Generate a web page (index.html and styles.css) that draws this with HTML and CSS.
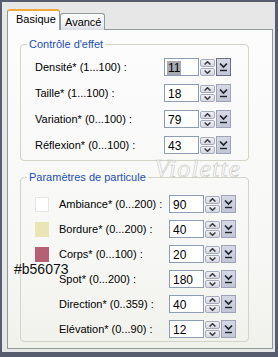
FILE: index.html
```html
<!DOCTYPE html>
<html lang="fr">
<head>
<meta charset="utf-8">
<link rel="stylesheet" href="styles.css">
</head>
<body>
<div class="window">
  <div class="tabs">
    <div class="tab active">Basique</div>
    <div class="tab">Avancé</div>
  </div>
  <div class="panel">
    <fieldset class="group g1">
      <legend>Contrôle d'effet</legend>
      <div class="row first">
        <span class="label">Densité* (1...100) :</span>
        <div class="field"><span class="val sel">11</span></div>
        <div class="spin"><span class="sb"><svg width="7" height="4" viewBox="0 0 7 4"><path d="M0.6 3.5L3.5 0.7L6.4 3.5" stroke="#3a3a44" stroke-width="1.5" fill="none"/></svg></span><span class="sb"><svg width="7" height="4" viewBox="0 0 7 4"><path d="M0.6 0.5L3.5 3.3L6.4 0.5" stroke="#3a3a44" stroke-width="1.5" fill="none"/></svg></span></div>
        <div class="drop focus"><svg width="9" height="10" viewBox="0 0 9 10"><path d="M1 1.5L4.5 5L8 1.5" stroke="#22222c" stroke-width="1.7" fill="none"/><path d="M1 8.5h7" stroke="#22222c" stroke-width="1.4"/></svg></div>
      </div>
      <div class="row">
        <span class="label">Taille* (1...100) :</span>
        <div class="field"><span class="val">18</span></div>
        <div class="spin"><span class="sb"><svg width="7" height="4" viewBox="0 0 7 4"><path d="M0.6 3.5L3.5 0.7L6.4 3.5" stroke="#3a3a44" stroke-width="1.5" fill="none"/></svg></span><span class="sb"><svg width="7" height="4" viewBox="0 0 7 4"><path d="M0.6 0.5L3.5 3.3L6.4 0.5" stroke="#3a3a44" stroke-width="1.5" fill="none"/></svg></span></div>
        <div class="drop"><svg width="9" height="10" viewBox="0 0 9 10"><path d="M1 1.5L4.5 5L8 1.5" stroke="#22222c" stroke-width="1.7" fill="none"/><path d="M1 8.5h7" stroke="#22222c" stroke-width="1.4"/></svg></div>
      </div>
      <div class="row">
        <span class="label">Variation* (0...100) :</span>
        <div class="field"><span class="val">79</span></div>
        <div class="spin"><span class="sb"><svg width="7" height="4" viewBox="0 0 7 4"><path d="M0.6 3.5L3.5 0.7L6.4 3.5" stroke="#3a3a44" stroke-width="1.5" fill="none"/></svg></span><span class="sb"><svg width="7" height="4" viewBox="0 0 7 4"><path d="M0.6 0.5L3.5 3.3L6.4 0.5" stroke="#3a3a44" stroke-width="1.5" fill="none"/></svg></span></div>
        <div class="drop"><svg width="9" height="10" viewBox="0 0 9 10"><path d="M1 1.5L4.5 5L8 1.5" stroke="#22222c" stroke-width="1.7" fill="none"/><path d="M1 8.5h7" stroke="#22222c" stroke-width="1.4"/></svg></div>
      </div>
      <div class="row">
        <span class="label">Réflexion* (0...100) :</span>
        <div class="field"><span class="val">43</span></div>
        <div class="spin"><span class="sb"><svg width="7" height="4" viewBox="0 0 7 4"><path d="M0.6 3.5L3.5 0.7L6.4 3.5" stroke="#3a3a44" stroke-width="1.5" fill="none"/></svg></span><span class="sb"><svg width="7" height="4" viewBox="0 0 7 4"><path d="M0.6 0.5L3.5 3.3L6.4 0.5" stroke="#3a3a44" stroke-width="1.5" fill="none"/></svg></span></div>
        <div class="drop"><svg width="9" height="10" viewBox="0 0 9 10"><path d="M1 1.5L4.5 5L8 1.5" stroke="#22222c" stroke-width="1.7" fill="none"/><path d="M1 8.5h7" stroke="#22222c" stroke-width="1.4"/></svg></div>
      </div>
    </fieldset>

    <fieldset class="group g2">
      <legend>Paramètres de particule</legend>
      <div class="row first">
        <span class="swatch white"></span>
        <span class="label">Ambiance* (0...200) :</span>
        <div class="field"><span class="val">90</span></div>
        <div class="spin"><span class="sb"><svg width="7" height="4" viewBox="0 0 7 4"><path d="M0.6 3.5L3.5 0.7L6.4 3.5" stroke="#3a3a44" stroke-width="1.5" fill="none"/></svg></span><span class="sb"><svg width="7" height="4" viewBox="0 0 7 4"><path d="M0.6 0.5L3.5 3.3L6.4 0.5" stroke="#3a3a44" stroke-width="1.5" fill="none"/></svg></span></div>
        <div class="drop"><svg width="9" height="10" viewBox="0 0 9 10"><path d="M1 1.5L4.5 5L8 1.5" stroke="#22222c" stroke-width="1.7" fill="none"/><path d="M1 8.5h7" stroke="#22222c" stroke-width="1.4"/></svg></div>
      </div>
      <div class="row">
        <span class="swatch beige"></span>
        <span class="label">Bordure* (0...200) :</span>
        <div class="field"><span class="val">40</span></div>
        <div class="spin"><span class="sb"><svg width="7" height="4" viewBox="0 0 7 4"><path d="M0.6 3.5L3.5 0.7L6.4 3.5" stroke="#3a3a44" stroke-width="1.5" fill="none"/></svg></span><span class="sb"><svg width="7" height="4" viewBox="0 0 7 4"><path d="M0.6 0.5L3.5 3.3L6.4 0.5" stroke="#3a3a44" stroke-width="1.5" fill="none"/></svg></span></div>
        <div class="drop"><svg width="9" height="10" viewBox="0 0 9 10"><path d="M1 1.5L4.5 5L8 1.5" stroke="#22222c" stroke-width="1.7" fill="none"/><path d="M1 8.5h7" stroke="#22222c" stroke-width="1.4"/></svg></div>
      </div>
      <div class="row">
        <span class="swatch rose"></span>
        <span class="label">Corps* (0...100) :</span>
        <div class="field"><span class="val">20</span></div>
        <div class="spin"><span class="sb"><svg width="7" height="4" viewBox="0 0 7 4"><path d="M0.6 3.5L3.5 0.7L6.4 3.5" stroke="#3a3a44" stroke-width="1.5" fill="none"/></svg></span><span class="sb"><svg width="7" height="4" viewBox="0 0 7 4"><path d="M0.6 0.5L3.5 3.3L6.4 0.5" stroke="#3a3a44" stroke-width="1.5" fill="none"/></svg></span></div>
        <div class="drop"><svg width="9" height="10" viewBox="0 0 9 10"><path d="M1 1.5L4.5 5L8 1.5" stroke="#22222c" stroke-width="1.7" fill="none"/><path d="M1 8.5h7" stroke="#22222c" stroke-width="1.4"/></svg></div>
      </div>
      <div class="row">
        <span class="swatch none"></span>
        <span class="label">Spot* (0...200) :</span>
        <div class="field"><span class="val">180</span></div>
        <div class="spin"><span class="sb"><svg width="7" height="4" viewBox="0 0 7 4"><path d="M0.6 3.5L3.5 0.7L6.4 3.5" stroke="#3a3a44" stroke-width="1.5" fill="none"/></svg></span><span class="sb"><svg width="7" height="4" viewBox="0 0 7 4"><path d="M0.6 0.5L3.5 3.3L6.4 0.5" stroke="#3a3a44" stroke-width="1.5" fill="none"/></svg></span></div>
        <div class="drop"><svg width="9" height="10" viewBox="0 0 9 10"><path d="M1 1.5L4.5 5L8 1.5" stroke="#22222c" stroke-width="1.7" fill="none"/><path d="M1 8.5h7" stroke="#22222c" stroke-width="1.4"/></svg></div>
      </div>
      <div class="row">
        <span class="swatch none"></span>
        <span class="label">Direction* (0..359) :</span>
        <div class="field"><span class="val">40</span></div>
        <div class="spin"><span class="sb"><svg width="7" height="4" viewBox="0 0 7 4"><path d="M0.6 3.5L3.5 0.7L6.4 3.5" stroke="#3a3a44" stroke-width="1.5" fill="none"/></svg></span><span class="sb"><svg width="7" height="4" viewBox="0 0 7 4"><path d="M0.6 0.5L3.5 3.3L6.4 0.5" stroke="#3a3a44" stroke-width="1.5" fill="none"/></svg></span></div>
        <div class="drop"><svg width="9" height="10" viewBox="0 0 9 10"><path d="M1 1.5L4.5 5L8 1.5" stroke="#22222c" stroke-width="1.7" fill="none"/><path d="M1 8.5h7" stroke="#22222c" stroke-width="1.4"/></svg></div>
      </div>
      <div class="row">
        <span class="swatch none"></span>
        <span class="label">Elévation* (0...90) :</span>
        <div class="field"><span class="val">12</span></div>
        <div class="spin"><span class="sb"><svg width="7" height="4" viewBox="0 0 7 4"><path d="M0.6 3.5L3.5 0.7L6.4 3.5" stroke="#3a3a44" stroke-width="1.5" fill="none"/></svg></span><span class="sb"><svg width="7" height="4" viewBox="0 0 7 4"><path d="M0.6 0.5L3.5 3.3L6.4 0.5" stroke="#3a3a44" stroke-width="1.5" fill="none"/></svg></span></div>
        <div class="drop"><svg width="9" height="10" viewBox="0 0 9 10"><path d="M1 1.5L4.5 5L8 1.5" stroke="#22222c" stroke-width="1.7" fill="none"/><path d="M1 8.5h7" stroke="#22222c" stroke-width="1.4"/></svg></div>
      </div>
    </fieldset>
    <div class="watermark">Violette</div>
  </div>
  <div class="note">#b56073</div>
</div>
</body>
</html>
```

FILE: styles.css
```css
* { box-sizing: border-box; }
html, body { margin: 0; padding: 0; }
body {
  width: 278px;
  height: 357px;
  overflow: hidden;
  font-family: "Liberation Sans", Arial, sans-serif;
  font-size: 11px;
  color: #000;
}
.window {
  position: relative;
  width: 278px;
  height: 357px;
  border-style: solid;
  border-color: #575c6e;
  border-width: 2px 3px 5px 2px;
  background: #e7e7e7;
  padding: 8px 0 3px 5px;
  display: flex;
  flex-direction: column;
}
.tabs {
  display: flex;
  align-items: flex-end;
  height: 20px;
  margin-bottom: -1px;
  position: relative;
  z-index: 1;
}
.tab {
  height: 17px;
  width: 45px;
  border: 1px solid #919b9c;
  border-bottom: none;
  border-radius: 3px 3px 0 0;
  background: linear-gradient(#fefefe, #f2f2f4 60%, #dcdce6);
  font-size: 11px;
  line-height: 16px;
  padding-left: 4px;
  color: #000;
  white-space: nowrap;
}
.tab.active {
  width: 53px;
  height: 21px;
  background: #fcfcfe;
  border-top: 2px solid #f0a93a;
  padding-left: 8px;
  line-height: 17px;
}
.panel {
  position: relative;
  width: 266px;
  flex: 1;
  border: 1px solid #919b9c;
  background: linear-gradient(#fcfcfd, #f7f7f5 70%, #f1f1ec);
  padding: 8px 0 0 12px;
}
.group {
  margin: 0;
  width: 229px;
  border: 1px solid #d3d3c6;
  border-radius: 4px;
  padding: 0 0 6px 14px;
}
.g2 {
  margin-top: 10px;
  padding-bottom: 3px;
}
legend {
  margin-left: -8px;
  padding: 0 2px;
  color: #1d4fb4;
  font-size: 11px;
  line-height: 13px;
}
.row {
  display: flex;
  align-items: center;
  height: 18px;
  margin-top: 8px;
}
.g1 .row.first { margin-top: 7px; }
.g2 .row { margin-top: 7px; }
.g2 .row.first { margin-top: 11px; }
.label {
  white-space: nowrap;
  font-size: 11px;
}
.g1 .label { width: 129px; }
.g2 .label { width: 110px; }
.swatch {
  width: 14px;
  height: 15px;
  margin-right: 10px;
  flex: none;
}
.swatch.white { background: #fff; border: 1px solid #e6e6e6; }
.swatch.beige { background: #e9e6b4; }
.swatch.rose { background: #b56073; }
.field {
  width: 35px;
  height: 18px;
  border: 1px solid #8d9db3;
  background: #fff;
  padding: 1px 0 0 2px;
  display: flex;
  align-items: center;
}
.val {
  font-size: 12px;
  line-height: 14px;
  padding: 0 1px;
}
.val.sel { background: #a9a9b2; }
.spin {
  margin-left: 1px;
  width: 15px;
  height: 17px;
  display: flex;
  flex-direction: column;
  gap: 1px;
}
.sb {
  flex: 1;
  border: 1px solid #a6aabd;
  border-radius: 2px;
  background: linear-gradient(#f0f0f6, #d6d7e2);
  display: flex;
  align-items: center;
  justify-content: center;
}
.drop {
  margin-left: 1px;
  width: 15px;
  height: 18px;
  border: 1px solid #9ea2b8;
  background: linear-gradient(#d6d8e4, #c3c6d6);
  display: flex;
  align-items: center;
  justify-content: center;
}
.drop.focus { border-color: #6a6e86; }
.watermark {
  position: absolute;
  left: 146px;
  top: 124px;
  font-family: "Liberation Serif", serif;
  font-style: italic;
  font-size: 26px;
  line-height: 30px;
  letter-spacing: 1px;
  color: rgba(255,255,255,0.4);
  -webkit-text-stroke: 0.6px #c9c9c9;
}
.note {
  position: absolute;
  left: 12px;
  top: 259px;
  font-family: "Liberation Sans", Arial, sans-serif;
  font-size: 14px;
  line-height: 16px;
  color: #111;
}
```
